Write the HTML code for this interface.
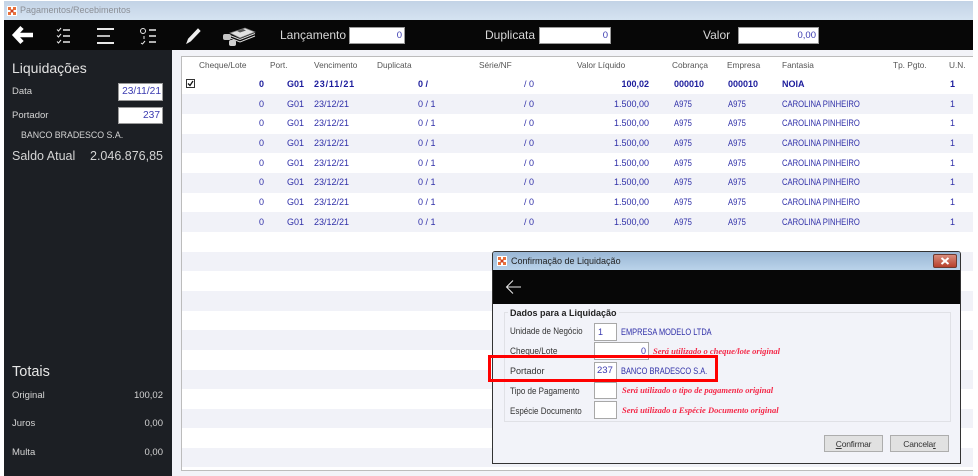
<!DOCTYPE html>
<html lang="pt">
<head>
<meta charset="utf-8">
<title>Pagamentos/Recebimentos</title>
<style>
html,body{margin:0;padding:0;background:#fff}
#p{position:relative;width:978px;height:476px;overflow:hidden;background:#fff;font-family:"Liberation Sans",sans-serif;font-size:9px;color:#2f2fa8;filter:blur(.3px)}
#p div{position:absolute;white-space:nowrap}
.tb{left:4px;top:1px;width:969px;height:19px;background:linear-gradient(#c3d3e6,#d5e3f1)}
.blk{background:#070707}
.lb{color:#d8d8d8;font-size:12px;line-height:16px}
.inp{background:#fff;border:1px solid #9a9a9a;box-sizing:border-box;text-align:right;color:#3a3ab0;font-size:9.5px;line-height:15px;padding-right:2px}
.sl{color:#d4d4d4;font-size:9.5px;line-height:12px}
.h{color:#555;font-size:8.3px;line-height:12px;top:59px}
.st{left:182px;width:791px;height:19.7px;background:#f1f2f8}
.t{line-height:12px}
.c{transform:scaleX(.85);transform-origin:0 50%}
.c2{transform:scaleX(.825);transform-origin:0 50%}
.b{font-weight:bold;color:#1c1c9c}
.r{text-align:right}
.g{color:#333;font-size:9px;line-height:12px;transform:scaleX(.89);transform-origin:0 50%}
.bx{background:#fff;border:1px solid #a8a8a8;box-sizing:border-box}
.red{color:#f42848;font-family:"Liberation Serif",serif;font-style:italic;font-weight:bold;font-size:8.5px;line-height:12px}
.btn{background:#e1e1e1;border:1px solid #adadad;box-sizing:border-box;color:#333;font-size:8.5px;letter-spacing:-.2px;line-height:16px;text-align:center}
</style>
</head>
<body>
<div id="p">
<div class="tb"></div>
<svg style="position:absolute;left:7px;top:6px" width="10" height="10"><rect width="10" height="10" fill="#fff"/><rect x="1" y="1" width="3" height="3" fill="#e8703a"/><rect x="6" y="1" width="3" height="3" fill="#e8703a"/><rect x="1" y="6" width="3" height="3" fill="#e8703a"/><rect x="6" y="6" width="3" height="3" fill="#e8703a"/><rect x="3.5" y="3.5" width="3" height="3" fill="#d04020"/></svg>
<div style="left:20px;top:4px;color:#8b8f96;font-size:9px;line-height:13px">Pagamentos/Recebimentos</div>

<div class="blk" style="left:4px;top:20px;width:969px;height:30px"></div>
<svg style="position:absolute;left:4px;top:20px" width="260" height="30" fill="none" stroke="#e8e8e8">
<path d="M10 15H29" stroke="#fff" stroke-width="4.5"/><path d="M18 7.5L11 15L18 22.5" stroke="#fff" stroke-width="4.5"/>
<path d="M53 9.5l1.500 1.500 2.500-3M53 15.500l1.500 1.500 2.500-3M53 21.500l1.500 1.500 2.500-3" stroke-width="1"/><path d="M59 10H66M59 16H66M59 22H66" stroke-width="1.400"/>
<path d="M93 9H110" stroke-width="2"/><path d="M93 16H106" stroke-width="1.600"/><path d="M93 23H110" stroke-width="2"/>
<path d="M139 8.500a2.500 2.500 0 1 1 0 5a2.500 2.500 0 1 1 0-5M140 16v3M137 23l1.500 1 2.500-3" stroke-width="1"/><path d="M145 10H152M145 16H152M145 22H152" stroke-width="1.400"/>
<path d="M183 23L184.500 19L194 9L196 11L186.500 21Z" fill="#eee" stroke="#eee" stroke-width="1"/>
<path d="M226 13l15-5 10 4-15 6z" fill="#e0e0e0" stroke="#777" stroke-width=".7"/><path d="M226 15.500l10 4 15-6M226 18l10 4 15-6" stroke="#ddd" stroke-width="1"/>
<rect x="219" y="14" width="8" height="6" rx="2" fill="#c4c4c4" stroke="none"/><rect x="225" y="20" width="7" height="6" rx="2" fill="#d0d0d0" stroke="none"/>
<path d="M233 11l6-2 3 1.500-6 2z" fill="#555" stroke="none"/>
</svg>
<div class="lb" style="left:280px;top:27px">Lançamento</div>
<div class="inp" style="left:349px;top:27px;width:56px;height:17px">0</div>
<div class="lb" style="left:485px;top:27px">Duplicata</div>
<div class="inp" style="left:539px;top:27px;width:72px;height:17px">0</div>
<div class="lb" style="left:703px;top:27px">Valor</div>
<div class="inp" style="left:738px;top:27px;width:81px;height:17px">0,00</div>

<div style="left:172px;top:50px;width:801px;height:426px;background:#f2f3f8"></div>
<div style="left:4px;top:50px;width:168px;height:426px;background:#1c1f24"></div>
<div style="left:12px;top:60px;color:#e2e2e2;font-size:14px;line-height:17px">Liquidações</div>
<div class="sl" style="left:12px;top:86px">Data</div>
<div class="inp" style="left:118px;top:83px;width:45px;height:18px;line-height:16px;font-size:10.2px;padding-right:1px">23/11/21</div>
<div class="sl" style="left:12px;top:110px">Portador</div>
<div class="inp" style="left:118px;top:107px;width:45px;height:17px;font-size:10.2px">237</div>
<div class="sl" style="left:21px;top:129px;font-size:8.800px">BANCO BRADESCO S.A.</div>
<div style="left:12px;top:148px;color:#d4d4d4;font-size:12.500px;line-height:16px">Saldo Atual</div>
<div class="r" style="left:70px;width:93px;top:148px;color:#d4d4d4;font-size:12.500px;line-height:16px">2.046.876,85</div>
<div style="left:12px;top:364px;color:#e6e6e6;font-size:14.500px;line-height:17px">Totais</div>
<div class="sl" style="left:12px;top:390px">Original</div><div class="sl r" style="left:100px;width:63px;top:390px">100,02</div>
<div class="sl" style="left:12px;top:418px">Juros</div><div class="sl r" style="left:100px;width:63px;top:418px">0,00</div>
<div class="sl" style="left:12px;top:447px">Multa</div><div class="sl r" style="left:100px;width:63px;top:447px">0,00</div>

<!-- grid -->
<div style="left:181px;top:56px;width:792px;height:415px;background:#fff;border:1px solid #bcbcbc;border-right:0;box-sizing:border-box"></div>
<div class="st" style="top:94px"></div><div class="st" style="top:133.500px"></div><div class="st" style="top:173px"></div><div class="st" style="top:212px"></div><div class="st" style="top:251.500px"></div><div class="st" style="top:291px"></div><div class="st" style="top:330px"></div><div class="st" style="top:369.500px"></div><div class="st" style="top:408.500px"></div><div class="st" style="top:447.500px"></div>
<div class="h" style="left:199px">Cheque/Lote</div><div class="h" style="left:270px">Port.</div><div class="h" style="left:314px">Vencimento</div><div class="h" style="left:377px">Duplicata</div><div class="h" style="left:479px">Série/NF</div><div class="h" style="left:577px">Valor Líquido</div><div class="h" style="left:672px">Cobrança</div><div class="h" style="left:727px">Empresa</div><div class="h" style="left:782px">Fantasia</div><div class="h" style="left:893px">Tp. Pgto.</div><div class="h" style="left:949px">U.N.</div>

<svg style="position:absolute;left:186px;top:79px" width="9" height="9"><rect x=".5" y=".5" width="8" height="8" fill="#fff" stroke="#333"/><path d="M2 4.500L4 6.500L7 2" fill="none" stroke="#111" stroke-width="1.300"/></svg>
<div class="t b r" style="left:240px;width:24px;top:78px">0</div><div class="t b" style="left:287px;top:78px">G01</div><div class="t b" style="left:314px;top:78px;letter-spacing:.8px">23/11/21</div><div class="t b" style="left:418px;top:78px">0 /</div><div class="t" style="left:524px;top:78px">/ 0</div><div class="t b r" style="left:590px;width:59px;top:78px">100,02</div><div class="t b" style="left:674px;top:78px">000010</div><div class="t b" style="left:728px;top:78px">000010</div><div class="t b" style="left:782px;top:78px">NOIA</div><div class="t b" style="left:950px;top:78px">1</div>

<div class="t r" style="left:240px;width:24px;top:98px">0</div><div class="t" style="left:287px;top:98px">G01</div><div class="t" style="left:314px;top:98px">23/12/21</div><div class="t" style="left:418px;top:98px">0 / 1</div><div class="t" style="left:524px;top:98px">/ 0</div><div class="t r" style="left:590px;width:59px;top:98px">1.500,00</div><div class="t c" style="left:674px;top:98px">A975</div><div class="t c" style="left:728px;top:98px">A975</div><div class="t c" style="left:782px;top:98px">CAROLINA PINHEIRO</div><div class="t" style="left:950px;top:98px">1</div>
<div class="t r" style="left:240px;width:24px;top:117px">0</div><div class="t" style="left:287px;top:117px">G01</div><div class="t" style="left:314px;top:117px">23/12/21</div><div class="t" style="left:418px;top:117px">0 / 1</div><div class="t" style="left:524px;top:117px">/ 0</div><div class="t r" style="left:590px;width:59px;top:117px">1.500,00</div><div class="t c" style="left:674px;top:117px">A975</div><div class="t c" style="left:728px;top:117px">A975</div><div class="t c" style="left:782px;top:117px">CAROLINA PINHEIRO</div><div class="t" style="left:950px;top:117px">1</div>
<div class="t r" style="left:240px;width:24px;top:137px">0</div><div class="t" style="left:287px;top:137px">G01</div><div class="t" style="left:314px;top:137px">23/12/21</div><div class="t" style="left:418px;top:137px">0 / 1</div><div class="t" style="left:524px;top:137px">/ 0</div><div class="t r" style="left:590px;width:59px;top:137px">1.500,00</div><div class="t c" style="left:674px;top:137px">A975</div><div class="t c" style="left:728px;top:137px">A975</div><div class="t c" style="left:782px;top:137px">CAROLINA PINHEIRO</div><div class="t" style="left:950px;top:137px">1</div>
<div class="t r" style="left:240px;width:24px;top:157px">0</div><div class="t" style="left:287px;top:157px">G01</div><div class="t" style="left:314px;top:157px">23/12/21</div><div class="t" style="left:418px;top:157px">0 / 1</div><div class="t" style="left:524px;top:157px">/ 0</div><div class="t r" style="left:590px;width:59px;top:157px">1.500,00</div><div class="t c" style="left:674px;top:157px">A975</div><div class="t c" style="left:728px;top:157px">A975</div><div class="t c" style="left:782px;top:157px">CAROLINA PINHEIRO</div><div class="t" style="left:950px;top:157px">1</div>
<div class="t r" style="left:240px;width:24px;top:176px">0</div><div class="t" style="left:287px;top:176px">G01</div><div class="t" style="left:314px;top:176px">23/12/21</div><div class="t" style="left:418px;top:176px">0 / 1</div><div class="t" style="left:524px;top:176px">/ 0</div><div class="t r" style="left:590px;width:59px;top:176px">1.500,00</div><div class="t c" style="left:674px;top:176px">A975</div><div class="t c" style="left:728px;top:176px">A975</div><div class="t c" style="left:782px;top:176px">CAROLINA PINHEIRO</div><div class="t" style="left:950px;top:176px">1</div>
<div class="t r" style="left:240px;width:24px;top:196px">0</div><div class="t" style="left:287px;top:196px">G01</div><div class="t" style="left:314px;top:196px">23/12/21</div><div class="t" style="left:418px;top:196px">0 / 1</div><div class="t" style="left:524px;top:196px">/ 0</div><div class="t r" style="left:590px;width:59px;top:196px">1.500,00</div><div class="t c" style="left:674px;top:196px">A975</div><div class="t c" style="left:728px;top:196px">A975</div><div class="t c" style="left:782px;top:196px">CAROLINA PINHEIRO</div><div class="t" style="left:950px;top:196px">1</div>
<div class="t r" style="left:240px;width:24px;top:216px">0</div><div class="t" style="left:287px;top:216px">G01</div><div class="t" style="left:314px;top:216px">23/12/21</div><div class="t" style="left:418px;top:216px">0 / 1</div><div class="t" style="left:524px;top:216px">/ 0</div><div class="t r" style="left:590px;width:59px;top:216px">1.500,00</div><div class="t c" style="left:674px;top:216px">A975</div><div class="t c" style="left:728px;top:216px">A975</div><div class="t c" style="left:782px;top:216px">CAROLINA PINHEIRO</div><div class="t" style="left:950px;top:216px">1</div>

<!-- dialog -->
<div style="left:492px;top:251px;width:469px;height:213px;background:#f2f3f9;border:1px solid #333;border-radius:3px 3px 0 0;box-sizing:border-box"></div>
<div style="left:493px;top:252px;width:467px;height:18px;background:linear-gradient(#9ab7d5,#bad3ea);border-radius:2px 2px 0 0"></div>
<svg style="position:absolute;left:497px;top:256px" width="10" height="10"><rect width="10" height="10" fill="#fff"/><rect x="1" y="1" width="3" height="3" fill="#e8703a"/><rect x="6" y="1" width="3" height="3" fill="#e8703a"/><rect x="1" y="6" width="3" height="3" fill="#e8703a"/><rect x="6" y="6" width="3" height="3" fill="#e8703a"/><rect x="3.500" y="3.500" width="3" height="3" fill="#d04020"/></svg>
<div style="left:511px;top:255px;color:#222;font-size:9px;line-height:13px">Confirmação de Liquidação</div>
<div style="left:933px;top:254px;width:24px;height:14px;background:linear-gradient(#d88c7c,#b8402c);border:1px solid #6e3a30;box-sizing:border-box;border-radius:2px"></div>
<svg style="position:absolute;left:940px;top:257px" width="10" height="8"><path d="M1.500 1L8.500 7M8.500 1L1.500 7" stroke="#fff" stroke-width="2"/></svg>
<div class="blk" style="left:493px;top:270px;width:467px;height:34px"></div>
<svg style="position:absolute;left:505px;top:279px" width="18" height="16" fill="none" stroke="#e8e8e8" stroke-width="1"><path d="M1.500 8H16M8 1.500L1.500 8L8 14.500"/></svg>
<div style="left:504px;top:312px;width:447px;height:110px;border:1px solid #e0e1e6;box-sizing:border-box"></div>
<div style="left:508px;top:307px;padding:0 2px;background:#f2f3f9;color:#222;font-size:9px;font-weight:bold;line-height:13px">Dados para a Liquidação</div>
<div class="g" style="left:510px;top:325px">Unidade de Negócio</div>
<div class="bx" style="left:594px;top:323px;width:23px;height:18px;padding-left:3px;line-height:16px;color:#3a3ab0">1</div>
<div class="t c2" style="left:621px;top:326px">EMPRESA MODELO LTDA</div>
<div class="g" style="left:510px;top:345px;transform:scaleX(.92)">Cheque/Lote</div>
<div class="bx r" style="left:594px;top:342px;width:55px;height:18px;padding-right:2px;line-height:16px;color:#3a3ab0">0</div>
<div class="red" style="left:653px;top:345px">Será utilizado o cheque/lote original</div>
<div class="g" style="left:510px;top:365px;transform:none">Portador</div>
<div class="bx" style="left:594px;top:362px;width:23px;height:18px;padding-left:2px;line-height:16px;color:#3a3ab0;font-size:9.500px">237</div>
<div class="t c2" style="left:621px;top:365px">BANCO BRADESCO S.A.</div>
<div class="g" style="left:510px;top:385px">Tipo de Pagamento</div>
<div class="bx" style="left:594px;top:382px;width:23px;height:17px"></div>
<div class="red" style="left:622px;top:384px">Será utilizado o tipo de pagamento original</div>
<div class="g" style="left:510px;top:405px">Espécie Documento</div>
<div class="bx" style="left:594px;top:401px;width:23px;height:18px"></div>
<div class="red" style="left:622px;top:404px">Será utilizado a Espécie Documento original</div>
<div class="btn" style="left:824px;top:435px;width:59px;height:17px"><u>C</u>onfirmar</div>
<div class="btn" style="left:890px;top:435px;width:59px;height:17px">Cancela<u>r</u></div>
<div style="left:488px;top:355px;width:230px;height:27px;border:3px solid #f00;box-sizing:border-box"></div>
</div>
</body>
</html>
